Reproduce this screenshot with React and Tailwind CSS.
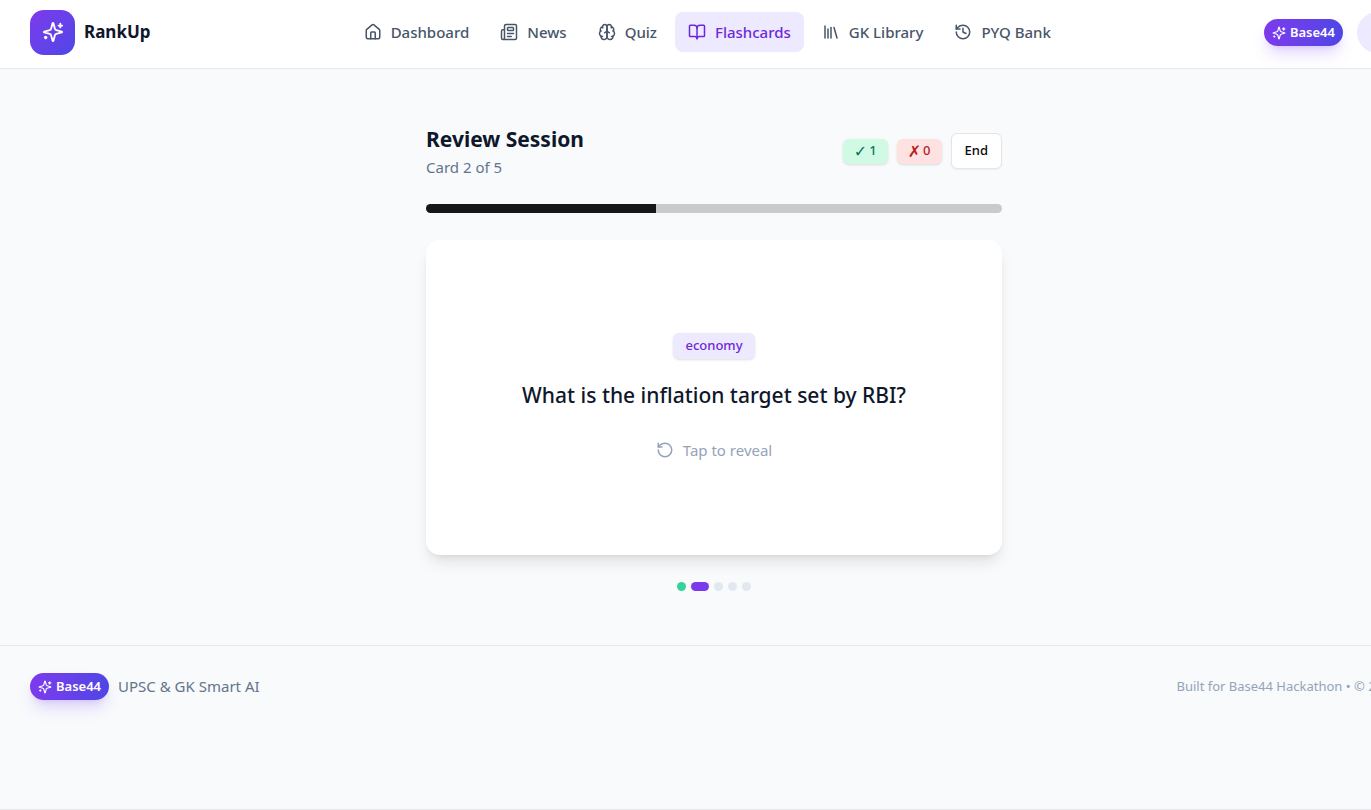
import React, { useState } from 'react';
import {
  BookOpen,
  History,
  House,
  Library,
  Newspaper,
  RotateCcw,
} from 'lucide-react';

const NAV_ITEMS = [
  { label: 'Dashboard', icon: House },
  { label: 'News', icon: Newspaper },
  { label: 'Quiz', icon: Brain },
  { label: 'Flashcards', icon: BookOpen, active: true },
  { label: 'GK Library', icon: Library },
  { label: 'PYQ Bank', icon: History },
];

const CARDS = ['done', 'current', 'todo', 'todo', 'todo'];

const DOT_CLASSES = {
  done: 'w-[9px] bg-[#34d399]',
  current: 'w-[18px] bg-[#7c3aed]',
  todo: 'w-[9px] bg-[#e2e8f0]',
};

function StrokeIcon({ className, children }) {
  return (
    <svg
      viewBox="0 0 24 24"
      fill="none"
      stroke="currentColor"
      strokeWidth="2"
      strokeLinecap="round"
      strokeLinejoin="round"
      className={className}
      aria-hidden="true"
    >
      {children}
    </svg>
  );
}

function Sparkles({ className }) {
  return (
    <StrokeIcon className={className}>
      <path d="M9.937 15.5A2 2 0 0 0 8.5 14.063l-6.135-1.582a.5.5 0 0 1 0-.962L8.5 9.936A2 2 0 0 0 9.937 8.5l1.582-6.135a.5.5 0 0 1 .963 0L14.063 8.5A2 2 0 0 0 15.5 9.937l6.135 1.581a.5.5 0 0 1 0 .964L15.5 14.063a2 2 0 0 0-1.437 1.437l-1.582 6.135a.5.5 0 0 1-.963 0z" />
      <path d="M20 3v4" />
      <path d="M22 5h-4" />
      <path d="M4 17v2" />
      <path d="M5 18H3" />
    </StrokeIcon>
  );
}

function Brain({ className }) {
  return (
    <StrokeIcon className={className}>
      <path d="M12 5a3 3 0 1 0-5.997.125 4 4 0 0 0-2.526 5.77 4 4 0 0 0 .556 6.588A4 4 0 1 0 12 18Z" />
      <path d="M12 5a3 3 0 1 1 5.997.125 4 4 0 0 1 2.526 5.77 4 4 0 0 1-.556 6.588A4 4 0 1 1 12 18Z" />
      <path d="M15 13a4.5 4.5 0 0 1-3-4 4.5 4.5 0 0 1-3 4" />
      <path d="M17.599 6.5a3 3 0 0 0 .399-1.375" />
      <path d="M6.003 5.125A3 3 0 0 0 6.401 6.5" />
      <path d="M3.477 10.896a4 4 0 0 1 .585-.396" />
      <path d="M19.938 10.5a4 4 0 0 1 .585.396" />
      <path d="M6 18a4 4 0 0 1-1.967-.516" />
      <path d="M19.967 17.484A4 4 0 0 1 18 18" />
    </StrokeIcon>
  );
}

function BaseBadge() {
  return (
    <span className="flex h-[27px] items-center gap-1 rounded-full bg-gradient-to-r from-[#7c3aed] to-[#4f46e5] px-2 pt-px text-[13px] font-semibold text-white shadow-lg shadow-[#8b5cf6]/25">
      <Sparkles className="size-[14px]" />
      Base44
    </span>
  );
}

function Header() {
  return (
    <header className="flex h-[69px] items-center justify-between border-b border-gray-200 bg-white px-[30px] pb-1">
      <a href="#home" className="flex items-center gap-[9px]">
        <span className="flex size-[45px] items-center justify-center rounded-[14px] bg-gradient-to-br from-[#7c3aed] to-[#4f46e5]">
          <Sparkles className="size-[22px] text-white" />
        </span>
        <span className="text-[17px] font-bold text-slate-900">RankUp</span>
      </a>

      <nav className="flex items-center gap-[5px]">
        {NAV_ITEMS.map(({ label, icon: Icon, active }) => (
          <a
            key={label}
            href="#nav"
            className={`flex h-10 items-center gap-[9px] rounded-lg px-[13px] text-[15px] font-medium ${
              active ? 'bg-[#ede9fe] text-[#6d28d9]' : 'text-[#475569]'
            }`}
          >
            <Icon className="size-[18px]" />
            {label}
          </a>
        ))}
      </nav>

      <div className="flex items-center gap-[14px]">
        <BaseBadge />
        <span className="size-[41px] rounded-full bg-[#ede9fe]" />
      </div>
    </header>
  );
}

function ScoreBadge({ className, mark, count }) {
  return (
    <span
      className={`flex h-[25px] items-center gap-[2px] rounded-md px-[11px] text-[13px] font-medium shadow-sm ${className}`}
    >
      <span className="text-base leading-none">{mark}</span>
      <span>{count}</span>
    </span>
  );
}

function ReviewSession() {
  const [revealed, setRevealed] = useState(false);
  const progress = 40;

  return (
    <main className="mx-auto w-full max-w-[576px] py-[54px]">
      <div className="flex items-center justify-between">
        <div>
          <h1 className="text-[21px] leading-8 font-bold text-slate-900">Review Session</h1>
          <p className="text-[15px] leading-6 text-[#64748b]">Card 2 of 5</p>
        </div>
        <div className="flex items-center gap-[9px]">
          <ScoreBadge className="bg-[#d1fae5] text-[#047857]" mark="✓" count={1} />
          <ScoreBadge className="bg-[#fee2e2] text-[#b91c1c]" mark="✗" count={0} />
          <button className="h-9 rounded-md border border-neutral-200 bg-white px-[13px] text-[13px] font-medium text-neutral-950 shadow-xs">
            End
          </button>
        </div>
      </div>

      <div
        role="progressbar"
        aria-label="Session progress"
        aria-valuenow={progress}
        className="mt-[25px] h-[9px] overflow-hidden rounded-full bg-[#c9cacc]"
      >
        <div className="h-full bg-neutral-900" style={{ width: `${progress}%` }} />
      </div>

      <button
        onClick={() => setRevealed(!revealed)}
        className="mt-[27px] flex h-[315px] w-full flex-col items-center justify-center rounded-[14px] bg-white shadow-lg"
      >
        <span className="flex h-[26px] items-center rounded-md bg-[#ede9fe] px-3 text-[13px] font-medium text-[#6d28d9] shadow-sm">
          economy
        </span>
        <span className="mt-5 text-[21px] leading-8 font-medium text-slate-900">
          {revealed ? '4% (with a band of +/- 2%)' : 'What is the inflation target set by RBI?'}
        </span>
        <span className="mt-[27px] flex items-center gap-[9px] text-[15px] leading-6 text-[#94a3b8]">
          <RotateCcw className="size-[18px]" />
          Tap to reveal
        </span>
      </button>

      <div className="mt-[27px] flex justify-center gap-[5px]">
        {CARDS.map((state, i) => (
          <span key={i} className={`h-[9px] rounded-full ${DOT_CLASSES[state]}`} />
        ))}
      </div>
    </main>
  );
}

function Footer() {
  return (
    <footer className="border-y border-gray-200">
      <div className="flex items-center justify-between px-[30px] pt-[27px] pb-[109px]">
        <div className="flex items-center gap-[9px]">
          <BaseBadge />
          <span className="text-[15px] text-[#64748b]">UPSC &amp; GK Smart AI</span>
        </div>
        <p className="text-[13px] text-[#94a3b8]">Built for Base44 Hackathon • © 2025</p>
      </div>
    </footer>
  );
}

export default function App() {
  return (
    <div className="min-h-screen overflow-x-hidden bg-slate-50 font-['Noto_Sans','DejaVu_Sans',sans-serif]">
      <div className="min-w-[1428px]">
        <Header />
        <ReviewSession />
        <Footer />
      </div>
    </div>
  );
}
